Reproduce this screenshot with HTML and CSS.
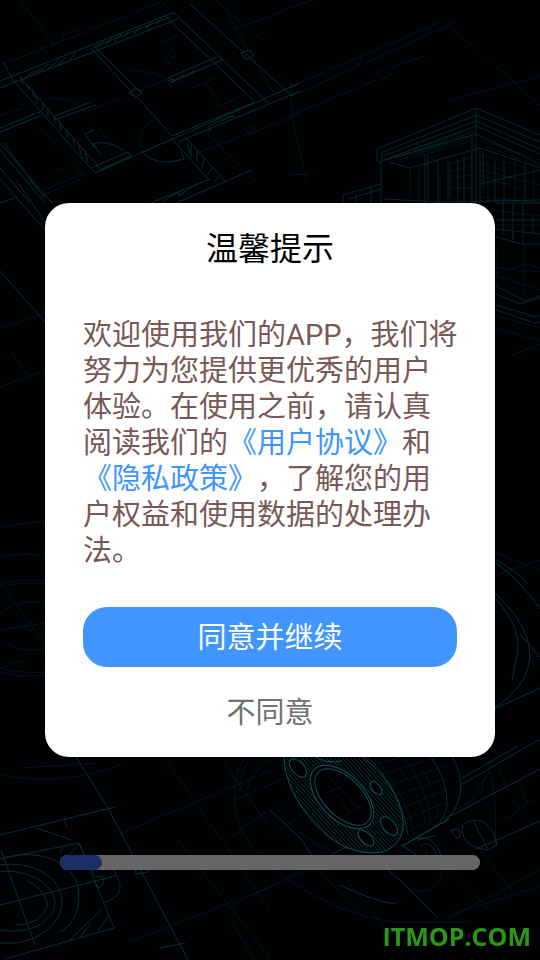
FILE: index.html
```html
<!DOCTYPE html>
<html lang="zh-CN">
  <head>
    <meta charset="UTF-8" />
    <meta name="viewport" content="width=device-width, initial-scale=1.0" />
    <title>温馨提示</title>
    <link rel="stylesheet" href="styles.css">
  </head>
  <body>
    <svg class="blueprint" viewBox="0 0 540 960" preserveAspectRatio="xMidYMid slice" aria-hidden="true">
      <defs>
        <clipPath id="flange">
          <path clip-rule="evenodd" d="M284 753C282 790 315 832 345 847C375 858 398 854 403 828C405 803 385 773 358 753ZM312 777C322 759 353 773 368 795C379 815 371 827 352 824C330 818 306 793 312 777Z" />
        </clipPath>
      </defs>

      <!-- floor plan -->
      <g class="line">
        <path d="M0 81L175 12M0 88L178 19M93 47L170 17M13 80L95 173M20 77L102 171M3 62L13 80" />
        <path d="M91 48L135 96M95 47L139 91M137 97L172 136M163 14L255 102M173 12L268 103M190 4L292 96" />
        <path d="M95 173L300 83M102 169L131 156M91 168L128 152L132 157M172 136L255 102M178 142L300 91" />
        <path d="M166 79L217 57M170 83L222 60M171 138L210 181M185 137L226 182M151 203L210 179M176 203L252 170" />
        <path d="M0 132L42 115M0 128L42 111M55 116L91 102M54 120L96 105M0 143L52 203M4 143L38 190M0 150L45 203M0 168L30 203" />
        <path d="M20 76L23 84M26 83L29 90M32 90L35 98M37 96L37 104M43 102L43 110M48 108L48 116M54 115L55 124M60 122L61 131M66 130L68 138M73 138L75 147M79 145L81 155M85 153L88 162" />
        <path d="M187 143L190 153M191 145L191 157M197 151V162M204 158L202 169M212 168L207 175M219 176L214 182" />
        <path d="M24 79L35 70M30 77L41 68M39 72L49 64M48 69L58 60M57 66L66 57M69 60L76 53M96 49L104 42M105 45L112 38M114 42L121 34M123 38L130 30M134 34L141 26M146 28L153 21M157 24L162 17" />
        <path d="M93 144Q108 139 124 151M93 143L100 154M85 134L94 130M85 134L94 147M141 150Q154 168 184 159L181 151" />
        <path d="M129 93L136 88L142 92L136 97ZM241 53L250 50L254 55L246 60ZM0 203L15 198M0 179L45 230M16 180L45 222M30 180L45 198M167 81L174 79L172 82L184 75L183 78L195 70L193 74" />
        <path d="M210 131L209 126L217 122L221 121L229 117L235 116M164 201L178 192L179 196L196 184M0 271L45 322" />
      </g>
      <g class="line faint">
        <path d="M4 64L160 2M160 0L165 5M20 0L54 44M62 40L64 35L76 30L80 34L71 39M42 46L47 54M139 91L165 80M88 111L124 98" />
        <path d="M200 152L300 114M244 129L252 126L257 131L249 135ZM206 132L260 186M215 0L262 40M225 10L273 92M42 191L84 173M41 196L85 177" />
        <path d="M50 98Q76 98 84 111L107 138M37 125L60 150L85 176M52 174L64 167M0 116L25 107L22 102M125 71Q162 68 172 90M140 148Q139 123 159 118M156 44L178 35M162 52L170 64M170 49Q180 55 172 58L166 50M181 80L190 89L215 78M205 82L220 106L245 95" />
        <path d="M233 30L300 4M291 83L292 116Q300 150 306 180M228 0L235 7M0 329L45 313M0 387L45 370M11 351L27 375" />
        <path d="M290 87L440 22M290 97L456 22M290 116L376 80M391 68L424 56M375 74L387 68L392 74L380 80ZM352 60Q359 70 362 57M443 20L540 105M450 100L540 76M290 8L312 0M291 175L310 174" />
      </g>

      <!-- house -->
      <g class="line house">
        <path d="M377 149L476 108L540 135M383 152L476 115L540 142M383 156L476 121L540 149M384 160L476 126L540 154M378 162L476 134L540 164" />
        <path d="M377 149V161L382 162V150M381 162V203M476 108V203M472 137V203M480 149V203M343 195L381 184M343 195V203M349 199L381 189M356 194V203M371 187V203" />
        <path d="M389 162L410 168L480 148L540 168M425 155V203M428 155V200M438 159V203M448 160V199M450 162V199M458 160V203M464 157V203" />
        <path d="M483 151V190M495 160V203M504 161V203M525 163V203M480 184L540 170M383 199L440 202L540 200" />
        <path d="M496 203H540M496 220H540M496 229L540 234M496 237L522 244H540M496 286L525 301L540 296M496 294L520 304L540 298M496 305L536 317L540 315" />
        <path d="M503 203V234M513 203V240M523 203V244M533 216V234M496 310L535 323L540 322" />
      </g>
      <g class="line faint">
        <path d="M389 165L474 140M395 161L474 137M390 157L474 129M394 159L474 132M399 156L474 131M404 158L474 134M482 140L540 160M484 146L540 166M420 170L426 176M410 168V198M419 166V200M420 169L428 164M430 157L437 162" />
        <path d="M451 163L474 157M451 171L471 166M452 178L472 175M451 188H472M471 156V200M488 160V203M515 159V203M534 168V203M480 154L526 168M482 163L504 171M481 170L540 185M482 176L520 189M482 197L540 203" />
        <path d="M440 203V176M496 211L540 216M496 225H540M496 268L540 272M497 248V286M524 244V296M496 274L526 264L540 268M496 316L540 328M496 328L540 341M510 356L540 344M496 276L540 290" />
      </g>

      <!-- compass rings on the left -->
      <g class="line faint">
        <ellipse cx="32" cy="626" rx="37" ry="24" />
        <path d="M0 583Q35 575 90 587M0 586Q35 578 90 590M0 557Q20 552 60 557M0 527L45 521M0 630L45 623M0 583L60 664M24 626L30 622L36 625L31 631ZM0 668Q20 674 50 672M0 672Q20 678 50 675M5 667L12 662L26 661" />
        <path d="M0 774Q55 788 120 765M20 768L100 763M115 836L270 771M130 942L270 887M165 758L270 910M215 750L270 828M175 836L270 958" />
      </g>

      <!-- bearing drawing -->
      <g class="line">
        <path d="M0 835L115 807M64 818L67 826M0 859L79 843L114 928L5 959M79 843L95 877M37 828L71 840M0 905L115 876M1 850L35 945M76 757L108 808L188 960M134 862L136 874L148 872L144 864" />
        <path d="M95 877L102 876L104 884L99 888L94 881M60 853L65 845M69 855L79 844M70 940L102 909M80 937L91 923M98 931L109 915M105 902Q122 897 120 884L113 868M160 948L185 943" />
        <path d="M6 857C45 848 79 865 79 896C79 915 70 927 60 932M0 865C30 860 62 876 62 902C62 925 35 946 0 943M0 872C28 868 55 885 55 903C54 922 30 935 0 930M27 881Q42 886 48 905Q41 925 15 925" />
      </g>

      <!-- flange -->
      <g class="line bright">
        <g clip-path="url(#flange)" class="hatch">
          <path d="M210 740L340 884M214 740L344 884M218 740L348 884M222 740L352 884M226 740L356 884M230 740L360 884M234 740L364 884M238 740L368 884M242 740L372 884M246 740L376 884M250 740L380 884M254 740L384 884M258 740L388 884M262 740L392 884M266 740L396 884M270 740L400 884M274 740L404 884M278 740L408 884M282 740L412 884M286 740L416 884M290 740L420 884M294 740L424 884M298 740L428 884M302 740L432 884M306 740L436 884M310 740L440 884M314 740L444 884M318 740L448 884M322 740L452 884M326 740L456 884M330 740L460 884M334 740L464 884M338 740L468 884M342 740L472 884M346 740L476 884M350 740L480 884M354 740L484 884" />
        </g>
        <path d="M284 753C282 790 315 832 345 847C375 858 398 854 403 828C405 803 385 773 358 753" />
        <ellipse class="hole" cx="342" cy="797" rx="39" ry="22" transform="rotate(45 342 797)" />
        <ellipse cx="343" cy="797" rx="35" ry="19" transform="rotate(45 343 797)" />
        <ellipse class="hole" cx="298" cy="768" rx="11" ry="6" transform="rotate(48 298 768)" />
        <ellipse class="hole" cx="376" cy="788" rx="8" ry="4" transform="rotate(50 376 788)" />
        <ellipse class="hole" cx="389" cy="826" rx="11" ry="6" transform="rotate(50 389 826)" />
        <ellipse class="hole" cx="366" cy="838" rx="10" ry="5" transform="rotate(45 366 838)" />
        <path d="M310 753Q324 765 342 761M402 846L449 819" />
      </g>
      <g class="line">
        <path d="M363 753Q400 785 408 835M428 753Q448 778 447 806Q446 820 431 829M450 753Q464 775 460 795Q455 815 445 819L540 769" />
        <path d="M462 778L518 746M461 785L540 739M474 850L540 821M464 838Q457 822 474 820Q492 820 497 845L488 850Q470 848 464 838M488 850L474 822M451 830Q462 827 460 837Q456 841 451 830Z" />
        <path d="M417 841Q428 832 439 850L441 856M421 846Q431 839 436 854M425 852L433 860M401 844L420 858M388 870L403 883L438 918M347 847L330 855M340 885Q370 900 395 904M270 810L300 838L312 855M415 839L436 836" />
        <path d="M496 563Q520 580 540 609M496 560Q515 570 527 583M496 594Q545 640 523 680Q510 700 490 710M496 599Q525 632 516 660L512 680M520 634L540 657M490 711L540 688" />
      </g>
      <g class="line faint">
        <path d="M370 753Q405 788 414 834M385 756Q420 784 426 827M400 753Q427 785 431 824M410 753Q434 779 438 814M370 766L439 746M380 775L443 755M390 785L446 766M396 795L447 778M403 807L447 790M406 819L447 802M408 831L446 812" />
        <path d="M248 753Q230 775 236 815Q244 845 275 870Q335 915 395 922L470 922M255 753Q238 770 240 792M280 753Q250 770 247 790M270 800Q300 840 330 850M230 906L330 858M315 865L360 915M345 878L395 940M403 883Q435 905 442 870M440 923L540 870M450 915L540 886" />
        <path d="M489 765Q498 800 495 845M465 810L490 771M460 808L482 792L483 778M500 770L508 790M510 797L520 810M520 785L528 803M505 820L535 798M450 870L490 910M480 850L520 900M496 553L540 570M496 575L540 560M230 838L265 812M231 920L255 960" />
        <path d="M325 782L350 812M330 778L360 810M320 795L345 785M345 816L366 802M235 800L285 778M265 842L300 815" />
      </g>
    </svg>

    <main class="page">
      <section class="dialog" role="dialog" aria-labelledby="dialog-title">
        <h1 id="dialog-title" class="dialog-title">温馨提示</h1>
        <p class="dialog-text">欢迎使用我们的APP，我们将努力为您提供更优秀的用户体验。在使用之前，请认真阅读我们的<a href="#">《用户协议》</a>和<a href="#">《隐私政策》</a>，了解您的用户权益和使用数据的处理办法。</p>
        <button type="button" class="btn agree">同意并继续</button>
        <button type="button" class="btn decline">不同意</button>
      </section>

      <footer class="footer">
        <progress class="loading" value="10" max="100" aria-label="加载进度"></progress>
        <div class="site">ITMOP.COM</div>
      </footer>
    </main>
  </body>
</html>
```

FILE: styles.css
```css
* {
  box-sizing: border-box;
}
body {
  margin: 0;
  background-color: #000103;
  font-family: Roboto, "Noto Sans CJK SC", sans-serif;
}

/* Background drawing */
.blueprint {
  position: fixed;
  inset: 0;
  width: 100%;
  height: 100%;
  fill: none;
  stroke: #0b5156;
  stroke-width: 1;
}
.line {
  opacity: 0.6;
}
.house {
  opacity: 0.5;
}
.faint {
  opacity: 0.25;
}
.bright {
  stroke: #12696d;
  opacity: 0.8;
}
.hatch {
  opacity: 0.6;
}
.hole {
  fill: #000103;
}

/* Layout */
.page {
  position: relative;
  display: grid;
  grid-template-rows: 1fr auto 1fr;
  min-height: 100vh;
}

/* Dialog */
.dialog {
  grid-row: 2;
  display: flex;
  flex-direction: column;
  margin: 0 45px;
  padding: 28px 38px;
  background: #fff;
  border-radius: 24px;
}
.dialog-title {
  margin: 0 0 50px;
  font-size: 32px;
  font-weight: 400;
  line-height: 36px;
  text-align: center;
  color: #000;
}
.dialog-text {
  margin: 0 -2px 38px 0;
  font-size: 29px;
  line-height: 36px;
  color: #795858;
  text-spacing-trim: space-all;
}
.dialog-text a {
  color: #4095ff;
  text-decoration: none;
}
.btn {
  padding: 2px 0 0;
  border: none;
  font-family: inherit;
  font-size: 29px;
  line-height: 36px;
  cursor: pointer;
}
.agree {
  height: 60px;
  margin-bottom: 26px;
  border-radius: 24px;
  background: #4095ff;
  color: #fff;
}
.decline {
  height: 36px;
  background: none;
  color: #717171;
}

/* Loading bar and site name */
.footer {
  grid-row: 3;
  display: flex;
  flex-direction: column;
  justify-content: space-between;
  padding: 98px 9px 6px;
}
.loading {
  appearance: none;
  display: block;
  width: auto;
  height: 15px;
  margin: 0 51px;
  border: none;
  border-radius: 8px;
  background: #666;
  overflow: hidden;
}
.loading::-webkit-progress-bar {
  background: #666;
  border-radius: 8px;
}
.loading::-webkit-progress-value {
  background: #1f2d66;
  border-radius: 8px;
}
.site {
  font-family: "Open Sans", sans-serif;
  font-size: 25px;
  font-weight: 700;
  line-height: 36px;
  text-align: right;
  color: #2a9716;
}
```
